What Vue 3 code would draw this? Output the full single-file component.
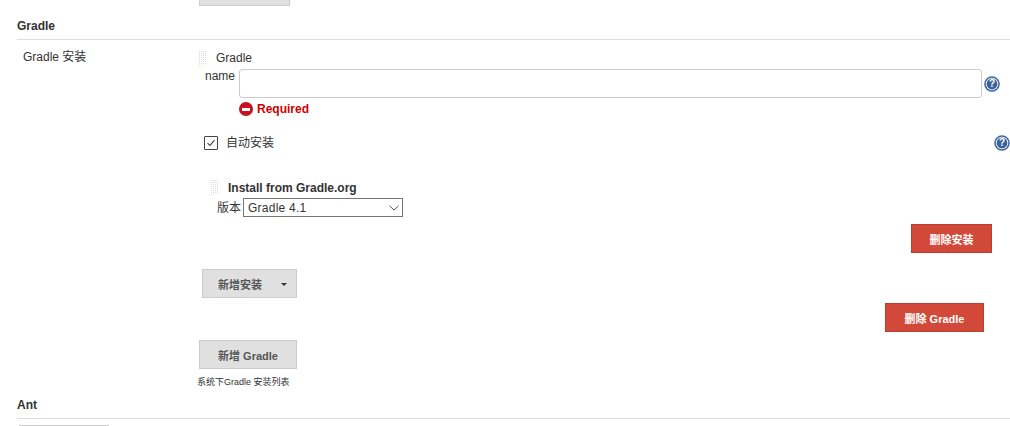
<script setup>
const dragCells = Array.from({ length: 30 })
</script>

<template>
  <div class="page">
    <div class="stub-top"></div>

    <h3 class="section-title">Gradle</h3>
    <div class="installs">
      <div class="installs-label">Gradle 安装</div>
      <div class="installs-body">
        <div class="handle-row">
          <div class="handle">
            <i v-for="(c, i) in dragCells" :key="i"></i>
          </div>
          <span class="handle-text">Gradle</span>
        </div>

        <div class="name-row">
          <label class="name-label">name</label>
          <div class="name-field">
            <input class="name-input" type="text" />
            <div class="error"><span class="error-icon"></span>Required</div>
          </div>
          <svg class="help" viewBox="0 0 16 16">
            <circle cx="8" cy="8" r="7" fill="#fff" stroke="#3f68a5" stroke-width="1.6" />
            <circle cx="8" cy="8" r="5.4" fill="#3a6199" />
            <text x="8" y="11.4" class="help-mark">?</text>
          </svg>
        </div>

        <div class="auto-row">
          <span class="checkbox">
            <svg viewBox="0 0 14 14"><path d="M3 7.2 L5.8 10 L11 3.6" fill="none" stroke="#333" stroke-width="1.2" /></svg>
          </span>
          <span class="auto-text">自动安装</span>
          <svg class="help" viewBox="0 0 16 16">
            <circle cx="8" cy="8" r="7" fill="#fff" stroke="#3f68a5" stroke-width="1.6" />
            <circle cx="8" cy="8" r="5.4" fill="#3a6199" />
            <text x="8" y="11.4" class="help-mark">?</text>
          </svg>
        </div>

        <div class="installer">
          <div class="handle-row">
            <div class="handle">
              <i v-for="(c, i) in dragCells" :key="i"></i>
            </div>
            <b class="installer-title">Install from Gradle.org</b>
          </div>
          <div class="version-row">
            <label class="version-label">版本</label>
            <div class="select">
              <span>Gradle 4.1</span>
              <svg viewBox="0 0 10 6"><path d="M0.5 0.8 L5 5 L9.5 0.8" fill="none" stroke="#555" stroke-width="1" /></svg>
            </div>
          </div>
        </div>

        <div class="del-install-row">
          <button class="btn btn-red del-install">删除安装</button>
        </div>

        <button class="btn btn-grey add-install">新增安装<span class="caret"></span></button>

        <div class="del-gradle-row">
          <button class="btn btn-red del-gradle">删除 Gradle</button>
        </div>

        <button class="btn btn-grey add-gradle">新增 Gradle</button>
        <div class="hint">系统下Gradle 安装列表</div>
      </div>
    </div>

    <h3 class="section-title ant">Ant</h3>
    <div class="stub-bottom"></div>
  </div>
</template>

<style scoped>
.page {
  width: 1010px;
  height: 426px;
  overflow: hidden;
  box-sizing: border-box;
  padding-left: 17px;
  font-family: "Liberation Sans", Arial, "Noto Sans CJK SC", sans-serif;
  font-size: 12px;
  color: #333;
  background: #fff;
}

.stub-top {
  width: 91px;
  height: 6px;
  margin-left: 182px;
  box-sizing: border-box;
  background: #e0e0e0;
  border: 1px solid #ccc;
  border-top: none;
}

.section-title {
  margin: 13px 0 0;
  height: 20px;
  padding-bottom: 0;
  border-bottom: 1px solid #ddd;
  font-size: 12px;
  line-height: 14px;
  font-weight: bold;
  color: #333;
}

.installs {
  display: flex;
}

.installs-label {
  width: 182px;
  padding: 10px 0 0 6px;
  box-sizing: border-box;
  line-height: 14px;
}

.installs-body {
  width: 811px;
  position: relative;
}

.handle-row {
  display: flex;
  align-items: center;
  height: 15px;
  margin-top: 11px;
}

.handle {
  width: 9px;
  height: 15px;
  display: grid;
  grid-template-columns: repeat(4, 2px);
  grid-auto-rows: 2px;
  gap: 0;
  overflow: hidden;
  flex: none;
}

.handle i {
  display: block;
  width: 2px;
  height: 2px;
  background: #ddd;
  border-right: 1px solid #fff;
  border-bottom: 1px solid #fff;
  box-sizing: border-box;
}

.handle-text {
  margin-left: 8px;
  line-height: 15px;
}

.name-row {
  display: flex;
  align-items: flex-start;
  margin-top: 3px;
}

.name-label {
  width: 40px;
  padding-right: 4px;
  box-sizing: border-box;
  text-align: right;
  line-height: 14px;
}

.name-field {
  width: 743px;
}

.name-input {
  display: block;
  width: 100%;
  height: 29px;
  box-sizing: border-box;
  border: 1px solid #ccc;
  border-radius: 3px;
  outline: none;
  background: #fff;
}

.error {
  display: flex;
  align-items: center;
  margin-top: 4px;
  height: 14px;
  font-weight: bold;
  color: #cc0000;
  line-height: 14px;
}

.error-icon {
  width: 14px;
  height: 14px;
  margin-right: 4px;
  border-radius: 50%;
  background: linear-gradient(#fff, #fff) center / 8px 3px no-repeat, #c4121f;
}

.help {
  width: 16px;
  height: 16px;
  margin: 7px 0 0 2px;
  flex: none;
}

.help-mark {
  font-family: "Liberation Sans", Arial, sans-serif;
  font-size: 10px;
  font-weight: bold;
  fill: #fff;
  text-anchor: middle;
}

.auto-row {
  display: flex;
  align-items: center;
  height: 16px;
  margin-top: 19px;
  padding-left: 5px;
  width: 806px;
  position: relative;
}

.auto-row .help {
  position: absolute;
  right: 0;
  top: 0;
  margin: 0;
}

.checkbox {
  width: 14px;
  height: 14px;
  box-sizing: border-box;
  border: 1px solid #444;
  border-radius: 1px;
  display: block;
  flex: none;
}

.checkbox svg {
  display: block;
  width: 12px;
  height: 12px;
}

.auto-text {
  margin-left: 8px;
  line-height: 16px;
}

.installer {
  margin-top: 29px;
  padding-left: 12px;
}

.installer .handle-row {
  margin-top: 0;
}

.installer-title {
  margin-left: 8px;
  color: #333;
}

.version-row {
  display: flex;
  align-items: center;
  margin-top: 3px;
  height: 19px;
}

.version-label {
  width: 26px;
  margin-left: 6px;
  line-height: 14px;
}

.select {
  width: 160px;
  height: 19px;
  box-sizing: border-box;
  border: 1px solid #767676;
  background: #fff;
  display: flex;
  align-items: center;
  justify-content: space-between;
  padding: 0 3px 0 4px;
  font-size: 12px;
  letter-spacing: 0.25px;
}

.select svg {
  width: 10px;
  height: 6px;
}

.btn {
  display: block;
  box-sizing: border-box;
  height: 29px;
  padding: 0;
  font-family: inherit;
  font-size: 11px;
  font-weight: bold;
  border-radius: 0;
  cursor: pointer;
}

.btn-grey {
  background: #e0e0e0;
  border: 1px solid #ccc;
  color: #555;
}

.btn-red {
  background: #d24939;
  border: 1px solid #bd3d2e;
  color: #fff;
}

.del-install-row {
  display: flex;
  justify-content: flex-end;
  width: 793px;
  margin-top: 7px;
}

.del-install {
  width: 81px;
}

.add-install {
  width: 95px;
  margin: 16px 0 0 3px;
  position: relative;
  padding-right: 19px;
}

.caret {
  position: absolute;
  right: 9px;
  top: 13px;
  border-left: 3.5px solid transparent;
  border-right: 3.5px solid transparent;
  border-top: 3px solid #333;
}

.del-gradle-row {
  display: flex;
  justify-content: flex-end;
  width: 785px;
  margin-top: 5px;
}

.del-gradle {
  width: 99px;
}

.add-gradle {
  width: 98px;
  margin-top: 8px;
}

.hint {
  margin: 7px 0 0 -2px;
  font-size: 9px;
  line-height: 12px;
  color: #333;
}

.section-title.ant {
  margin-top: 10px;
}

.stub-bottom {
  width: 90px;
  height: 20px;
  margin: 6px 0 0 2px;
  box-sizing: border-box;
  background: #e0e0e0;
  border: 1px solid #ccc;
}
</style>

<style>
html, body {
  margin: 0;
  background: #fff;
}
</style>
